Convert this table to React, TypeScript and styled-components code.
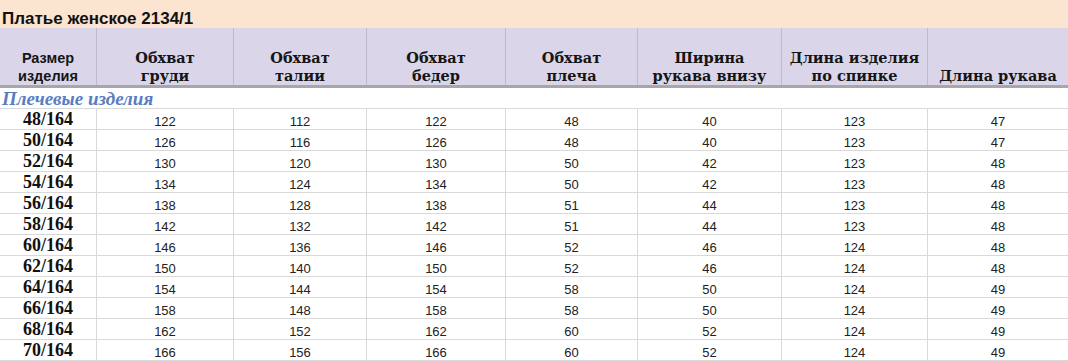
import styled, { createGlobalStyle } from "styled-components";

const GlobalStyle = createGlobalStyle`
  html, body {
    margin: 0;
    padding: 0;
    background: #ffffff;
  }
  body {
    width: 1068px;
    height: 361px;
    overflow: hidden;
  }
`;

const COLS = "97px 137px 133px 139px 132px 144px 146px 1fr";

const Sheet = styled.div`
  width: 1068px;
  display: flex;
  flex-direction: column;
`;

const TitleBar = styled.div`
  height: 28px;
  background: #fbe4d0;
  display: flex;
  align-items: flex-end;
  padding: 0 0 0 2px;
  box-sizing: border-box;
  font-family: "Liberation Sans", Arial, sans-serif;
  font-weight: bold;
  font-size: 17px;
  line-height: 19px;
  color: #111;
`;

const HeaderRow = styled.div`
  display: grid;
  grid-template-columns: ${COLS};
  height: 60px;
  background: #dbd5e9;
  border-bottom: 3px solid #a7a7a9;
  box-sizing: border-box;
`;

const HeadCell = styled.div<{ $sans?: boolean }>`
  display: flex;
  align-items: flex-end;
  justify-content: center;
  text-align: center;
  padding-bottom: 0;
  box-sizing: border-box;
  border-right: 1px solid #bfb9cf;
  color: #151515;
  font-weight: bold;
  font-family: ${(p) =>
    p.$sans
      ? `"Liberation Sans", Arial, sans-serif`
      : `"DejaVu Serif", "Liberation Serif", serif`};
  font-size: 14.5px;
  line-height: 18px;
  &:last-child {
    border-right: none;
  }
`;

const SectionRow = styled.div`
  height: 21px;
  border-bottom: 1px solid #d9d9d9;
  box-sizing: border-box;
  display: flex;
  align-items: flex-end;
  padding: 0 0 0 2px;
  font-family: "Liberation Serif", "Times New Roman", serif;
  font-style: italic;
  font-weight: bold;
  font-size: 19px;
  line-height: 18px;
  color: #5a7dbf;
`;

const Row = styled.div`
  display: grid;
  grid-template-columns: ${COLS};
  height: 21px;
  border-bottom: 1px solid #d9d9d9;
  box-sizing: border-box;
`;

const Cell = styled.div<{ $size?: boolean }>`
  display: flex;
  align-items: center;
  justify-content: center;
  border-right: 1px solid #d9d9d9;
  padding-top: ${(p) => (p.$size ? "0" : "3px")};
  box-sizing: border-box;
  color: ${(p) => (p.$size ? "#111" : "#222")};
  font-family: ${(p) =>
    p.$size
      ? `"Liberation Serif", "Times New Roman", serif`
      : `"Liberation Sans", Arial, sans-serif`};
  font-weight: ${(p) => (p.$size ? "bold" : "normal")};
  font-size: ${(p) => (p.$size ? "18px" : "13px")};
  &:last-child {
    border-right: none;
  }
`;

const headers = [
  "Обхват\nгруди",
  "Обхват\nталии",
  "Обхват\nбедер",
  "Обхват\nплеча",
  "Ширина\nрукава внизу",
  "Длина изделия\nпо спинке",
  "Длина рукава",
];

const rows: [string, number[]][] = [
  ["48/164", [122, 112, 122, 48, 40, 123, 47]],
  ["50/164", [126, 116, 126, 48, 40, 123, 47]],
  ["52/164", [130, 120, 130, 50, 42, 123, 48]],
  ["54/164", [134, 124, 134, 50, 42, 123, 48]],
  ["56/164", [138, 128, 138, 51, 44, 123, 48]],
  ["58/164", [142, 132, 142, 51, 44, 123, 48]],
  ["60/164", [146, 136, 146, 52, 46, 124, 48]],
  ["62/164", [150, 140, 150, 52, 46, 124, 48]],
  ["64/164", [154, 144, 154, 58, 50, 124, 49]],
  ["66/164", [158, 148, 158, 58, 50, 124, 49]],
  ["68/164", [162, 152, 162, 60, 52, 124, 49]],
  ["70/164", [166, 156, 166, 60, 52, 124, 49]],
];

const Lines = ({ text }: { text: string }) => (
  <span>
    {text.split("\n").map((l, i) => (
      <span key={i}>
        {i > 0 && <br />}
        {l}
      </span>
    ))}
  </span>
);

export default function App() {
  return (
    <Sheet>
      <GlobalStyle />
      <TitleBar>Платье женское 2134/1</TitleBar>
      <HeaderRow>
        <HeadCell $sans>
          <Lines text={"Размер\nизделия"} />
        </HeadCell>
        {headers.map((h) => (
          <HeadCell key={h}>
            <Lines text={h} />
          </HeadCell>
        ))}
      </HeaderRow>
      <SectionRow>Плечевые изделия</SectionRow>
      {rows.map(([size, vals]) => (
        <Row key={size}>
          <Cell $size>{size}</Cell>
          {vals.map((v, i) => (
            <Cell key={i}>{v}</Cell>
          ))}
        </Row>
      ))}
    </Sheet>
  );
}
